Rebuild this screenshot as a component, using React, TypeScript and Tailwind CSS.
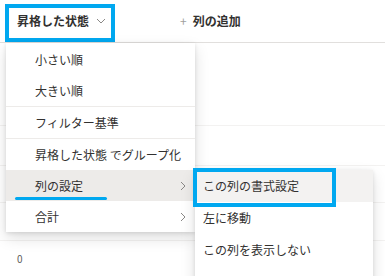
import React from "react";

const Chevron = () => (
  <svg width="6" height="10" viewBox="0 0 6 10" className="shrink-0">
    <path d="M1 1l4 4-4 4" fill="none" stroke="#8a8886" strokeWidth="1" />
  </svg>
);

const Item = ({ label, sub, active }: { label: string; sub?: boolean; active?: boolean }) => (
  <div className={`h-[31px] flex items-center pl-[29px] pr-[9px] ${active ? "bg-[#edebe9]" : ""}`}>
    <span className="flex-1 text-[12px] text-[#323130]">{label}</span>
    {sub && <Chevron />}
  </div>
);

const SubItem = ({ label, active }: { label: string; active?: boolean }) => (
  <div className={`h-[32px] flex items-center pl-[8px] ${active ? "bg-[#f3f2f1]" : ""}`}>
    <span className="text-[12px] text-[#323130]">{label}</span>
  </div>
);

export default function App() {
  return (
    <div
      className="relative w-[385px] h-[276px] overflow-hidden bg-white"
      style={{ fontFamily: '"Noto Sans CJK JP", "Noto Sans", sans-serif' }}
    >
      {/* background table */}
      <div className="flex flex-col">
        <div className="h-[43px] border-b border-[#e1dfdd] flex items-center">
          <div className="w-[176px] flex items-center pl-[17px] gap-[7px]">
            <span className="text-[12px] font-semibold text-[#323130]">昇格した状態</span>
            <svg width="10" height="6" viewBox="0 0 10 6">
              <path d="M1 1l4 4 4-4" fill="none" stroke="#8a8886" strokeWidth="1" />
            </svg>
          </div>
          <div className="flex items-center gap-[6px] pl-[4px]">
            <span className="text-[12px] text-[#a19f9d]">+</span>
            <span className="text-[12px] font-semibold text-[#323130]">列の追加</span>
          </div>
        </div>
        <div className="h-[83px] border-b border-[#f3f2f1]" />
        <div className="h-[40px] border-b border-[#f3f2f1]" />
        <div className="h-[37px] border-b border-[#f3f2f1]" />
        <div className="h-[38px] border-b border-[#f3f2f1]" />
        <div className="h-[34px] flex items-center pl-[17px]">
          <span className="text-[10px] text-[#605e5c]">0</span>
        </div>
      </div>

      {/* header highlight */}
      <div className="absolute left-[5px] top-[4px] w-[110px] h-[38px] border-[4px] border-[#00a8f0]" />

      {/* context menu */}
      <div className="absolute left-[6px] top-[43px] w-[189px] bg-white pt-[1px] shadow-[0_6px_14px_rgba(0,0,0,0.13),0_1px_4px_rgba(0,0,0,0.11)]">
        <Item label="小さい順" />
        <Item label="大きい順" />
        <div className="h-[1px] bg-[#edebe9]" />
        <Item label="フィルター基準" />
        <div className="h-[1px] bg-[#edebe9]" />
        <Item label="昇格した状態 でグループ化" />
        <Item label="列の設定" sub active />
        <Item label="合計" sub />
      </div>

      {/* underline annotation */}
      <div className="absolute left-[15px] top-[197px] w-[92px] h-[3px] rounded-full bg-[#00a8f0]" />

      {/* submenu */}
      <div className="absolute left-[195px] top-[170px] w-[178px] h-[130px] bg-white shadow-[0_6px_14px_rgba(0,0,0,0.13),0_1px_4px_rgba(0,0,0,0.11)]">
        <SubItem label="この列の書式設定" active />
        <SubItem label="左に移動" />
        <SubItem label="この列を表示しない" />
        <SubItem label="この列をピン留め" />
      </div>

      {/* submenu item highlight */}
      <div className="absolute left-[193px] top-[168px] w-[143px] h-[39px] border-[4px] border-[#00a8f0]" />
    </div>
  );
}
